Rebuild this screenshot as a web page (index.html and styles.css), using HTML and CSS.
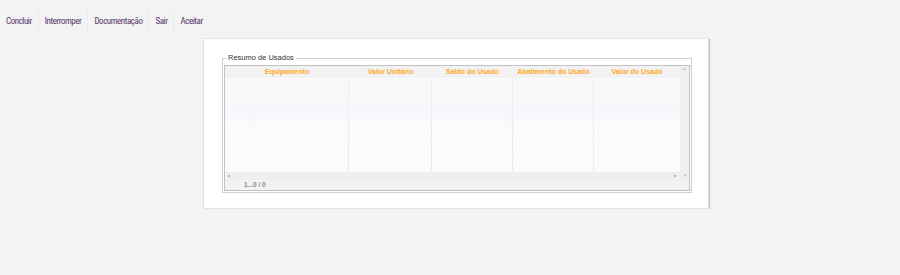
FILE: index.html
```html
<!DOCTYPE html>
<html lang="pt-BR">
<head>
  <meta charset="UTF-8" />
  <meta name="viewport" content="width=device-width, initial-scale=1.0" />
  <title>Resumo de Usados</title>
  <link rel="stylesheet" href="styles.css">
</head>
<body>
  <nav class="menu">
    <a href="#">Concluir</a>
    <a href="#">Interromper</a>
    <a href="#">Documentação</a>
    <a href="#">Sair</a>
    <a href="#">Aceitar</a>
  </nav>

  <div class="panel">
    <fieldset class="group">
      <legend>Resumo de Usados</legend>
      <div class="grid">
        <div class="grid-body">
          <div class="head">
            <div class="th">Equipamento</div>
            <div class="th">Valor Unitário</div>
            <div class="th">Saldo do Usado</div>
            <div class="th">Abatimento do Usado</div>
            <div class="th">Valor do Usado</div>
          </div>
          <div class="rows">
            <div class="col"></div>
            <div class="col"></div>
            <div class="col"></div>
            <div class="col"></div>
            <div class="col"></div>
          </div>
          <div class="vscroll"><span class="arrow">&#9650;</span></div>
        </div>
        <div class="hscroll">
          <span class="arrow">&#9664;</span>
          <span class="arrow">&#9654;</span>
          <span class="arrow corner">&#9660;</span>
        </div>
        <div class="pager">1...0 / 0</div>
      </div>
    </fieldset>
  </div>
</body>
</html>
```

FILE: styles.css
```css
body {
  margin: 0;
  background: #f3f3f3;
  font-family: "Liberation Sans", Arial, sans-serif;
}
.menu {
  display: flex;
  align-items: center;
  height: 22px;
  padding: 10px 0 6px 0;
}
.menu a {
  font-family: "Roboto Condensed", Lato, sans-serif;
  font-size: 9px;
  letter-spacing: -0.45px;
  color: #55346c;
  text-decoration: none;
  padding: 0 6px;
  line-height: 22px;
  border-left: 1px solid #eaeaea;
}
.menu a:first-child {
  border-left: none;
}
.panel {
  width: 470px;
  margin-left: 203px;
  padding: 15px 16px 15px 18px;
  background: #fff;
  border: 1px solid #e2e2e2;
  box-shadow: 1px 1px 1px #c4c4c4;
}
.group {
  margin: 0;
  padding: 1px;
  border: 1px solid #cfcfcf;
  box-shadow: inset 0 0 0 1px #fff;
}
.group legend {
  font-size: 7.5px;
  color: #333;
  padding: 0 2px;
  margin-left: 2px;
  line-height: 8px;
}
.grid {
  border: 1px solid #c2c2c2;
  margin-top: 2px;
  background: #f2f2f2;
}
.grid-body {
  display: grid;
  grid-template-columns: 1fr 9px;
  grid-template-rows: 12px 94px;
}
.head, .rows {
  display: grid;
  grid-template-columns: 124px 83px 81px 81px 86px;
  grid-column: 1;
}
.th {
  font-size: 7px;
  font-weight: bold;
  color: #ffa726;
  text-align: center;
  line-height: 12px;
  background: #f2f2f2;
}
.rows {
  background: linear-gradient(#f9f9fb 0, #f7f7fb 40px, #fafafd 41px, #fbfbfd 94px);
}
.col {
  border-right: 1px solid #ececf0;
}
.col:last-child {
  border-right: none;
}
.vscroll {
  grid-column: 2;
  grid-row: 1 / 3;
  background: #efefef;
  text-align: center;
}
.arrow {
  font-size: 4px;
  color: #b5b5b5;
  line-height: 8px;
}
.vscroll .arrow {
  display: block;
  line-height: 6px;
}
.hscroll {
  display: flex;
  align-items: center;
  height: 8px;
  padding: 0 2px;
  background: #efefef;
}
.hscroll .arrow:nth-child(2) {
  margin-left: auto;
  margin-right: 6px;
}
.pager {
  height: 10px;
  line-height: 10px;
  padding-left: 19px;
  font-size: 6.5px;
  font-weight: bold;
  color: #8a8a8a;
  background: #f2f2f2;
}
```
